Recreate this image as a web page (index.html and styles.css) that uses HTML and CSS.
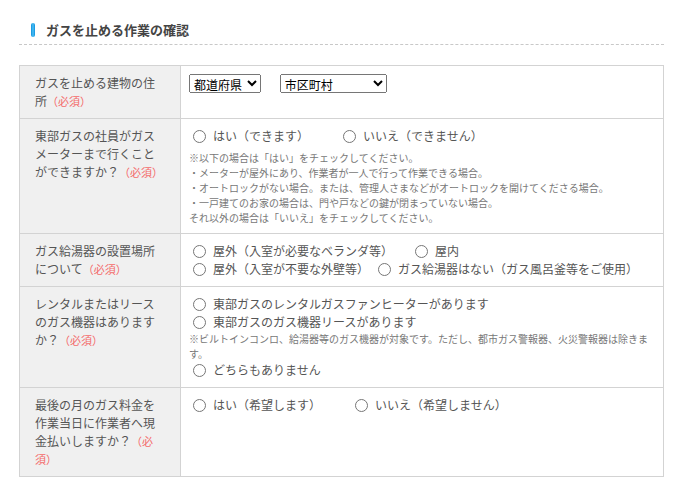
FILE: index.html
```html
<!DOCTYPE html>
<html lang="ja">
<head>
  <meta charset="UTF-8">
  <meta name="viewport" content="width=device-width, initial-scale=1.0">
  <title>ガスを止める作業の確認</title>
  <link rel="stylesheet" href="styles.css">
</head>
<body>
  <section class="section">
    <h2 class="section-title"><span class="title-bar"></span>ガスを止める作業の確認</h2>

    <div class="form-table">
      <div class="form-label">ガスを止める建物の住所<span class="req">（必須）</span></div>
      <div class="form-value">
        <select class="sel-pref">
          <option>都道府県</option>
        </select>
        <select class="sel-city">
          <option>市区町村</option>
        </select>
      </div>

      <div class="form-label">東部ガスの社員がガスメーターまで行くことができますか？<span class="req">（必須）</span></div>
      <div class="form-value">
        <div class="line">
          <label class="radio gap-wide"><input type="radio" name="meter">はい（できます）</label>
          <label class="radio"><input type="radio" name="meter">いいえ（できません）</label>
        </div>
        <p class="note spaced">※以下の場合は「はい」をチェックしてください。<br>
          ・メーターが屋外にあり、作業者が一人で行って作業できる場合。<br>
          ・オートロックがない場合。または、管理人さまなどがオートロックを開けてくださる場合。<br>
          ・一戸建てのお家の場合は、門や戸などの鍵が閉まっていない場合。<br>
          それ以外の場合は「いいえ」をチェックしてください。</p>
      </div>

      <div class="form-label">ガス給湯器の設置場所について<span class="req">（必須）</span></div>
      <div class="form-value">
        <div class="line">
          <label class="radio gap-mid"><input type="radio" name="heater">屋外（入室が必要なベランダ等）</label>
          <label class="radio"><input type="radio" name="heater">屋内</label>
        </div>
        <div class="line">
          <label class="radio gap-small"><input type="radio" name="heater">屋外（入室が不要な外壁等）</label>
          <label class="radio"><input type="radio" name="heater">ガス給湯器はない（ガス風呂釜等をご使用）</label>
        </div>
      </div>

      <div class="form-label">レンタルまたはリースのガス機器はありますか？<span class="req">（必須）</span></div>
      <div class="form-value">
        <div class="line">
          <label class="radio"><input type="radio" name="rental">東部ガスのレンタルガスファンヒーターがあります</label>
        </div>
        <div class="line">
          <label class="radio"><input type="radio" name="rental">東部ガスのガス機器リースがあります</label>
        </div>
        <p class="note">※ビルトインコンロ、給湯器等のガス機器が対象です。ただし、都市ガス警報器、火災警報器は除きます。</p>
        <div class="line">
          <label class="radio"><input type="radio" name="rental">どちらもありません</label>
        </div>
      </div>

      <div class="form-label">最後の月のガス料金を作業当日に作業者へ現金払いしますか？<span class="req">（必須）</span></div>
      <div class="form-value">
        <div class="line">
          <label class="radio gap-wide"><input type="radio" name="cash">はい（希望します）</label>
          <label class="radio"><input type="radio" name="cash">いいえ（希望しません）</label>
        </div>
      </div>
    </div>
  </section>
</body>
</html>
```

FILE: styles.css
```css
body {
  font-family: "Noto Sans CJK JP", "Noto Sans", sans-serif;
  margin: 0;
  padding: 0;
  background: #fff;
  color: #555;
}
.section {
  margin: 0 12px 0 19px;
}
.section-title {
  display: flex;
  align-items: center;
  gap: 11px;
  margin: 0;
  padding: 21px 0 6px 12px;
  border-bottom: 1px dashed #c8c8c8;
  font-size: 13px;
  line-height: 17px;
  font-weight: bold;
  color: #444;
}
.title-bar {
  width: 4px;
  height: 14px;
  border-radius: 2px;
  background: linear-gradient(to right, #0b8fdc, #4fc0f5 50%, #0b8fdc);
}
.form-table {
  display: grid;
  grid-template-columns: 161px 1fr;
  margin-top: 20px;
  border: 1px solid #d3d3d3;
  border-bottom: none;
}
.form-label {
  box-sizing: border-box;
  padding: 8px 17px 8px 15px;
  background: #f0f0f0;
  border-right: 1px solid #d3d3d3;
  border-bottom: 1px solid #d3d3d3;
  font-size: 12px;
  line-height: 18px;
  color: #555;
}
.req {
  font-size: 11px;
  line-height: 18px;
  color: #f46a6a;
}
.form-value {
  padding: 8px;
  border-bottom: 1px solid #d3d3d3;
  font-size: 12px;
  line-height: 18px;
}
select {
  font-family: inherit;
  font-size: 12px;
  height: 19px;
  padding: 0;
  color: #000;
  vertical-align: top;
}
.sel-pref {
  width: 72px;
  margin-right: 16px;
}
.sel-city {
  width: 107px;
}
.line {
  display: flex;
  height: 18px;
}
.radio {
  display: inline-flex;
  align-items: center;
  color: #555;
}
.radio input {
  width: 13px;
  height: 13px;
  margin: 0 7px 0 4px;
}
.gap-wide { margin-right: 30px; }
.gap-mid { margin-right: 18px; }
.gap-small { margin-right: 5px; }
.note {
  margin: 0;
  font-size: 10px;
  line-height: 15px;
  color: #777;
}
.note.spaced {
  margin-top: 5px;
}
```
